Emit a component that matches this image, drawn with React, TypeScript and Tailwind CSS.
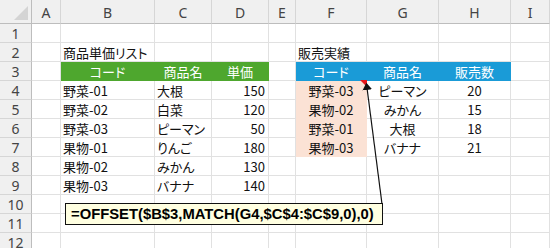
import React from 'react';

// 列見出し A〜I（I は右端まで伸ばす）
const COLS = ['A', 'B', 'C', 'D', 'E', 'F', 'G', 'H', 'I'];

type Cell = {
  text?: string;
  align?: 'left' | 'center' | 'right';
  fill?: string;
  color?: string;
  comment?: boolean;
};

const GREEN = 'bg-[#4ea72e]';
const BLUE = 'bg-[#1a9bd7]';
const PEACH = 'bg-[#fbe2d5]';

const priceList = [
  ['野菜-01', '大根', '150'],
  ['野菜-02', '白菜', '120'],
  ['野菜-03', 'ピーマン', '50'],
  ['果物-01', 'りんご', '180'],
  ['果物-02', 'みかん', '130'],
  ['果物-03', 'バナナ', '140'],
];

const sales = [
  ['野菜-03', 'ピーマン', '20'],
  ['果物-02', 'みかん', '15'],
  ['野菜-01', '大根', '18'],
  ['果物-03', 'バナナ', '21'],
];

// シートの内容を 12 行 × 9 列で組み立てる
const buildSheet = (): Cell[][] => {
  const rows: Cell[][] = Array.from({ length: 12 }, () => COLS.map(() => ({})));
  rows[1][1] = { text: '商品単価リスト' };
  rows[1][5] = { text: '販売実績' };

  rows[2][1] = { text: 'コード', align: 'center', fill: GREEN, color: 'text-white' };
  rows[2][2] = { text: '商品名', align: 'center', fill: GREEN, color: 'text-white' };
  rows[2][3] = { text: '単価', align: 'center', fill: GREEN, color: 'text-white' };
  rows[2][5] = { text: 'コード', align: 'center', fill: BLUE, color: 'text-white' };
  rows[2][6] = { text: '商品名', align: 'center', fill: BLUE, color: 'text-white' };
  rows[2][7] = { text: '販売数', align: 'center', fill: BLUE, color: 'text-white' };

  priceList.forEach(([code, name, price], i) => {
    rows[3 + i][1] = { text: code };
    rows[3 + i][2] = { text: name };
    rows[3 + i][3] = { text: price, align: 'right' };
  });

  sales.forEach(([code, name, qty], i) => {
    rows[3 + i][5] = { text: code, align: 'center', fill: PEACH, comment: i === 0 };
    rows[3 + i][6] = { text: name, align: 'center' };
    rows[3 + i][7] = { text: qty, align: 'center' };
  });

  return rows;
};

const alignClass = {
  left: 'justify-start pl-[2px]',
  center: 'justify-center',
  right: 'justify-end pr-[3px]',
};

const borderFor = (fill?: string) => {
  if (fill === GREEN) return 'border-[#4ea72e]';
  if (fill === BLUE) return 'border-[#1a9bd7]';
  if (fill === PEACH) return 'border-[#fbe2d5]';
  return 'border-[#e1e1e1]';
};

export default function App() {
  const sheet = buildSheet();

  return (
    <div
      className="relative w-[550px] h-[248px] overflow-hidden bg-white text-[13px] text-[#111]"
      style={{ fontFamily: '"Noto Sans CJK JP", "Noto Sans", sans-serif' }}
    >
      <div className="grid grid-cols-[32px_29px_94px_57px_57px_27px_71px_72px_72px_1fr] grid-rows-[24px_repeat(12,19px)]">
        {/* 左上の全選択ボタン */}
        <div className="relative bg-[#f0f0f0] border-r border-b border-[#bdbdbd]">
          <div className="absolute right-[3px] bottom-[3px] w-0 h-0 border-l-[14px] border-l-transparent border-b-[14px] border-b-[#d4d4d4]" />
        </div>
        {/* 列見出し */}
        {COLS.map((c) => (
          <div
            key={c}
            className="flex items-center justify-center pt-[2px] bg-[#f0f0f0] border-r border-b border-r-[#d6d6d6] border-b-[#bdbdbd] text-[#444] text-[14px]"
            style={{ fontFamily: '"Noto Sans", sans-serif' }}
          >
            {c}
          </div>
        ))}

        {sheet.map((row, r) => (
          <React.Fragment key={r}>
            {/* 行番号 */}
            <div
              className="flex items-center justify-center bg-[#f0f0f0] border-r border-b border-r-[#bdbdbd] border-b-[#d6d6d6] text-[#444] text-[14px]"
              style={{ fontFamily: '"Noto Sans", sans-serif' }}
            >
              {r + 1}
            </div>
            {row.map((cell, c) => (
              <div
                key={c}
                className={`relative flex items-center whitespace-nowrap leading-none [font-feature-settings:"palt"] border-r border-b ${borderFor(cell.fill)} ${cell.fill ?? ''} ${cell.color ?? ''} ${alignClass[cell.align ?? 'left']}`}
              >
                {cell.text}
                {cell.comment && (
                  <span className="absolute -right-px -top-px w-0 h-0 border-l-[7px] border-l-transparent border-t-[7px] border-t-[#e8181c]" />
                )}
              </div>
            ))}
          </React.Fragment>
        ))}
      </div>

      {/* 数式の吹き出しと矢印 */}
      <svg className="absolute left-0 top-0 pointer-events-none" width="550" height="248">
        <defs>
          <marker id="arrowhead" markerWidth="6" markerHeight="8" refX="5" refY="4" orient="auto">
            <path d="M0,0 L6,4 L0,8 z" fill="#111" />
          </marker>
        </defs>
        <line x1="382" y1="204" x2="366.5" y2="84" stroke="#111" strokeWidth="1.2" markerEnd="url(#arrowhead)" />
      </svg>
      <div
        className="absolute left-[65px] top-[203px] w-[318px] h-[22px] flex items-center pl-[5px] bg-[#ffffe1] border border-[#111] text-[14.8px] font-bold text-black whitespace-nowrap"
        style={{ fontFamily: '"Liberation Sans", Arial, sans-serif' }}
      >
        =OFFSET($B$3,MATCH(G4,$C$4:$C$9,0),0)
      </div>
    </div>
  );
}
